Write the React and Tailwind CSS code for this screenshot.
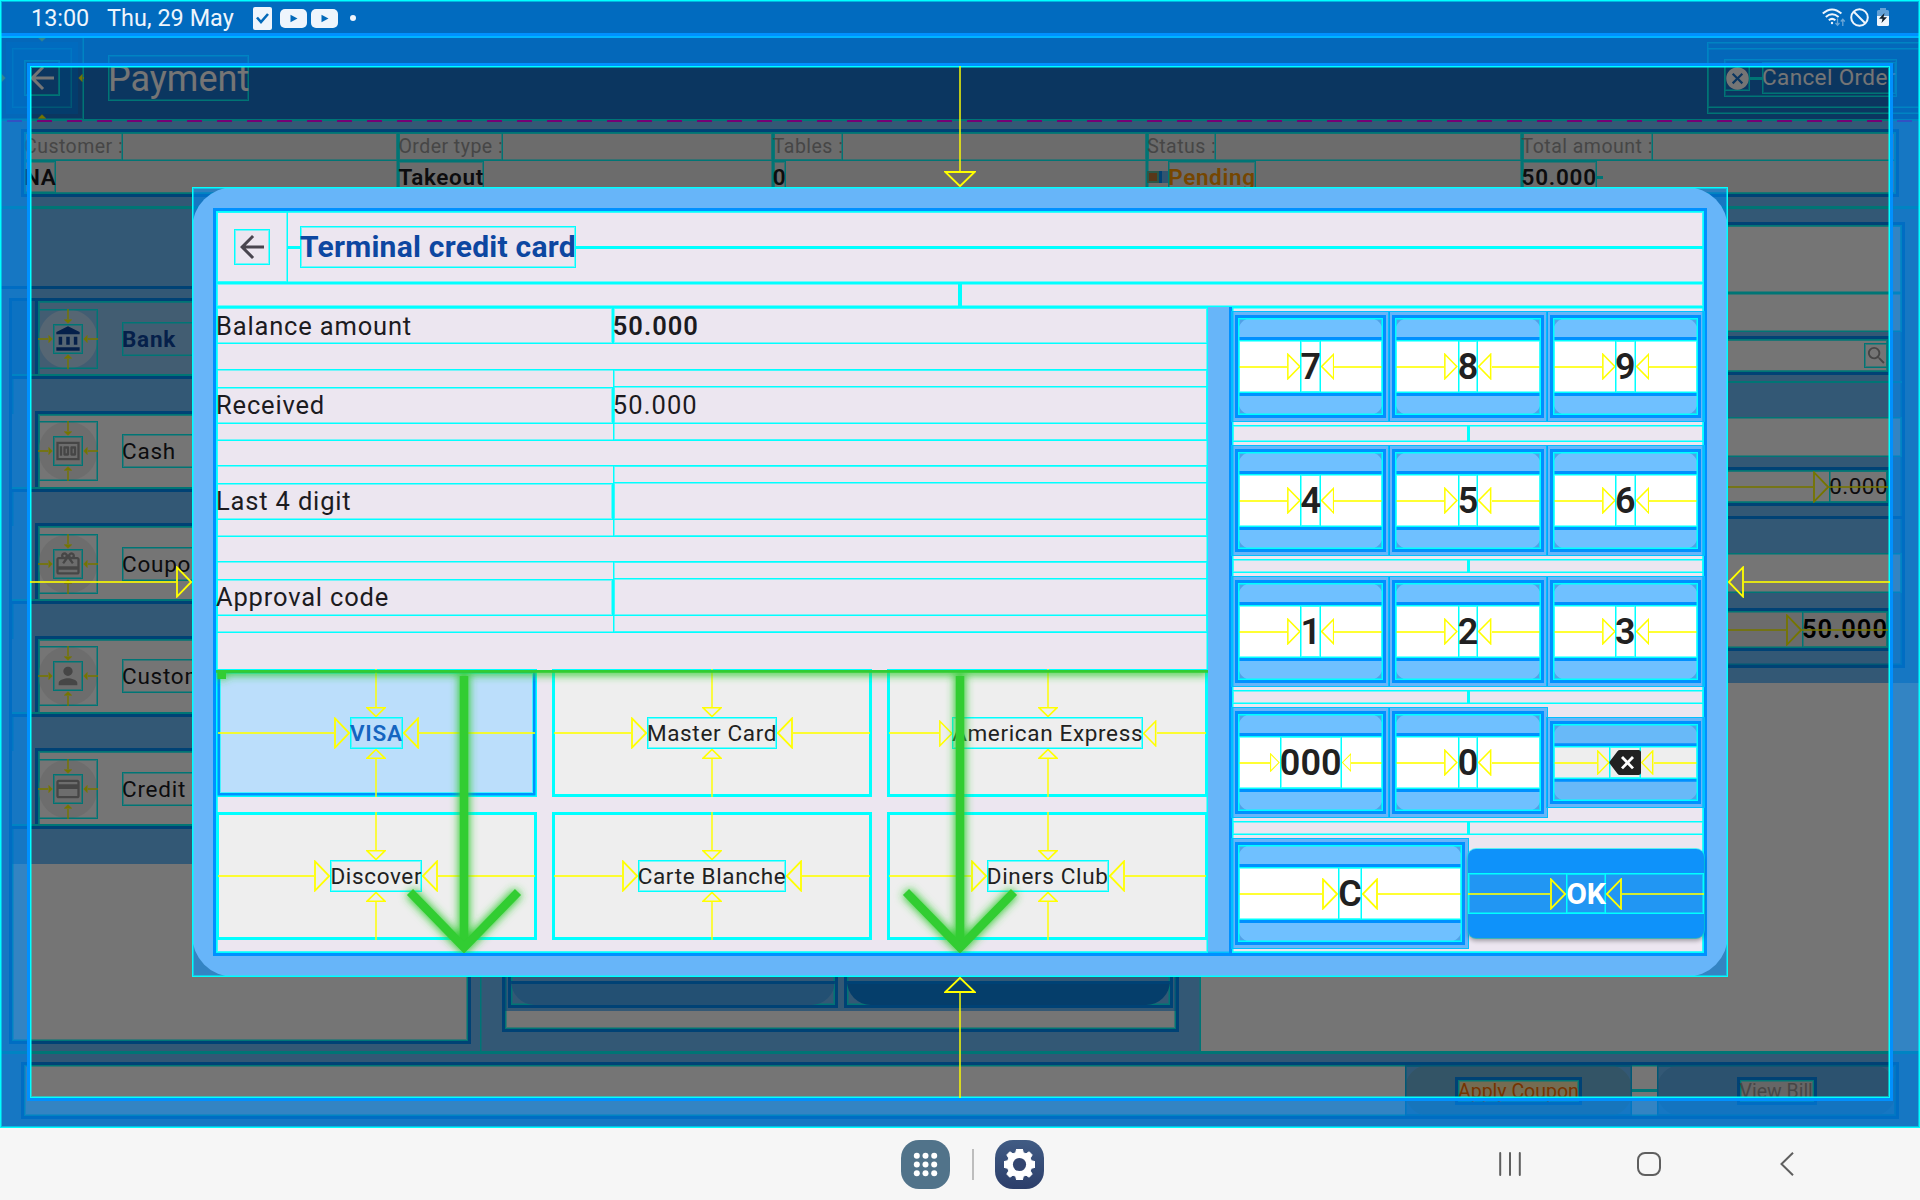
import React from "react";
import { MdArrowBack, MdAccountBalance, MdMoney, MdCardGiftcard, MdPerson, MdCreditCard, MdCancel, MdSearch } from "react-icons/md";

/* Debug-paint primitives: cyan size outline, translucent padding fill, solid padding edge */
const SIZE = "shadow-[inset_0_0_0_1px_#00ffff,inset_0_0_0_2px_#00ffff80]";
const EDGE = "shadow-[0_0_0_3px_#0090ff,inset_0_0_0_1px_#00ffff,inset_0_0_0_2px_#00ffff80]";
const FILL = "border-[#0090ff90]";

function Head({ dir, size, color = "#ffff00", solid }) {
  const d = {
    right: "M1 1.4L15.2 16L1 30.6Z",
    left: "M15 1.4L0.8 16L15 30.6Z",
    down: "M1.4 1L16 15.2L30.6 1Z",
    up: "M1.4 15L16 0.8L30.6 15Z",
  }[dir];
  const horizontal = dir === "right" || dir === "left";
  return (
    <svg className={`shrink-0 ${size}`} viewBox={horizontal ? "0 0 16 32" : "0 0 32 16"}>
      <path d={d} fill={solid ? color : "none"} stroke={color} strokeWidth={horizontal || size.includes("32px") ? 1.8 : 2.6} />
    </svg>
  );
}

function HArrow({ dir, size = "w-[16px] h-[32px]", solid, className = "flex-1" }) {
  const line = <div className="h-[2px] flex-1 bg-[#ffff00cc]" />;
  return (
    <div className={`flex min-w-0 items-center ${className}`}>
      {dir === "right" && line}
      <Head dir={dir} size={size} solid={solid} />
      {dir === "left" && line}
    </div>
  );
}

function VArrow({ dir, size = "w-[32px] h-[16px]", solid, className = "flex-1" }) {
  const line = <div className="w-[2px] flex-1 bg-[#ffff00b8]" />;
  return (
    <div className={`flex min-h-0 flex-col items-center ${className}`}>
      {dir === "down" && line}
      <Head dir={dir} size={size} solid={solid} />
      {dir === "up" && line}
    </div>
  );
}

/* ---------- page behind the dialog ---------- */

function InfoCell({ label, children }) {
  return (
    <div className={`flex flex-col items-start ${SIZE}`}>
      <div className={`h-[29px] w-full ${SIZE}`}>
        <div className={`w-fit whitespace-nowrap pt-[1px] text-[19.5px] leading-[28px] tracking-[0.47px] text-[#9a9a9a] ${SIZE}`}>{label}</div>
      </div>
      <div className="flex h-[32px] items-center text-[22.5px] font-semibold leading-[32px] tracking-[0.65px] text-[#1c1b1f]">{children}</div>
    </div>
  );
}

const methods = [
  { name: "Bank", Icon: MdAccountBalance, active: true },
  { name: "Cash", Icon: MdMoney },
  { name: "Coupon", Icon: MdCardGiftcard },
  { name: "Customer", Icon: MdPerson },
  { name: "Credit", Icon: MdCreditCard },
];

function MethodRow({ name, Icon, active }) {
  return (
    <>
      <div className={`h-[75px] border-l-[26px] ${FILL} ${active ? "bg-[#90caf9]" : "bg-white"} ${SIZE}`}>
        <div className={`flex h-full items-center ${EDGE}`}>
          <div className={`flex size-[60px] flex-col items-center ${SIZE} ${active ? "bg-[radial-gradient(circle,#bbdefb_29px,transparent_30px)]" : "bg-[radial-gradient(circle,#eeeeee_29px,transparent_30px)]"}`}>
            <VArrow dir="down" solid size="w-[8px] h-[5px]" />
            <div className="flex w-full items-center">
              <HArrow dir="right" solid size="w-[5px] h-[8px]" />
              <div className={`flex size-[30px] items-center justify-center ${SIZE}`}>
                <Icon className={`size-[28px] ${active ? "text-[#0d47a1]" : "text-[#9a9a9a]"}`} />
              </div>
              <HArrow dir="left" solid size="w-[5px] h-[8px]" />
            </div>
            <VArrow dir="up" solid size="w-[8px] h-[5px]" />
          </div>
          <div className={`ml-[24px] flex-1 text-[22.5px] leading-[34px] tracking-[0.75px] ${SIZE} ${active ? "font-bold text-[#0d47a1]" : "text-[#1c1b1f]"}`}>{name}</div>
        </div>
      </div>
      <div className="relative h-[37.5px] border-t-[3px] border-[#0090ff] bg-[#0090ff90] bg-clip-padding">
        <div className="absolute inset-x-0 -top-[5px] h-[2px] bg-[#00ffff]" />
      </div>
    </>
  );
}

function Amount({ text, cls, box }) {
  return (
    <div className={`flex ${EDGE} ${box}`}>
      <HArrow dir="right" />
      <div className="relative">
        <div className={`flex h-full items-center ${SIZE} ${cls}`}>{text}</div>
        <div className="absolute inset-x-0 top-1/2 h-[2px] -translate-y-1/2 bg-[#ffff00cc]" />
      </div>
    </div>
  );
}

function FooterButton({ bg, width, text, textWidth, color }) {
  return (
    <div className={`relative ${width}`}>
      <div className={`absolute inset-0 rounded-[24px] ${bg}`} />
      <div className={`relative flex h-full items-center justify-center ${SIZE}`}>
        <div className="absolute inset-0 bg-[#0090ff90]" />
        <div className={`relative h-[22px] whitespace-nowrap text-[19.5px] leading-[23px] ${textWidth} ${bg} ${color} ${EDGE}`}>{text}</div>
      </div>
    </div>
  );
}

function Page() {
  return (
    <div className="absolute inset-x-0 top-0 flex h-[1128px] flex-col bg-white">
      <header className="h-[120px] bg-[#1976d2]">
        <div className="h-[36px] border-b-[3px] border-[#0090ff] bg-[#0090ff90] bg-clip-padding" />
        <div className="flex h-[84px] items-center shadow-[inset_0_1.5px_0_0_#00ffff]">
          <div className={`flex size-[84px] flex-col items-center justify-center ${SIZE}`}>
            <VArrow dir="down" solid size="w-[8px] h-[5px]" />
            <div className="flex w-full items-center">
              <HArrow dir="right" solid size="w-[5px] h-[8px]" />
              <div className={`size-[72px] border-[6px] ${FILL} ${SIZE}`}>
                <div className={`size-[60px] border-[12px] ${FILL} ${SIZE}`}>
                  <div className={`flex size-[36px] items-center justify-center ${SIZE}`}>
                    <MdArrowBack className="size-[36px] text-white" />
                  </div>
                </div>
              </div>
              <HArrow dir="left" solid size="w-[5px] h-[8px]" />
            </div>
            <VArrow dir="up" solid size="w-[8px] h-[5px]" />
          </div>
          <div className={`ml-[24px] h-[46px] text-[36px] leading-[48px] text-white ${SIZE}`}>Payment</div>
          <div className={`ml-auto flex h-[72px] w-[213px] flex-col py-[6px] ${SIZE}`}>
            <div className={`h-[60px] py-[11px] pl-[17px] ${SIZE}`}>
              <div className={`flex h-[38px] w-[173px] items-center ${SIZE}`}>
                <div className={`flex h-[26px] w-[26px] items-center justify-center ${SIZE}`}>
                  <MdCancel className="size-[27px] shrink-0 text-white" />
                </div>
                <div className="h-[3px] w-[12px] shrink-0 bg-[#00ffff]" />
                <div className={`flex h-[32px] items-center whitespace-nowrap text-[22.5px] tracking-[0.375px] text-white ${SIZE}`}>Cancel Order</div>
              </div>
            </div>
          </div>
        </div>
      </header>

      <div className={`relative h-[87px] border-x-[24px] border-b-[13px] border-t-[12px] ${FILL}`}>
        <div className={`grid h-[62px] grid-cols-5 bg-[#ebebeb] ${EDGE}`}>
          <InfoCell label="Customer :"><span className={SIZE}>NA</span></InfoCell>
          <InfoCell label="Order type :"><span className={SIZE}>Takeout</span></InfoCell>
          <InfoCell label="Tables :"><span className={SIZE}>0</span></InfoCell>
          <InfoCell label="Status :">
            <span className="size-[12px] border-2 border-[#00ffff80] bg-[#c07838]" />
            <span className="h-[12px] w-[9px] border-l-[3px] border-[#0090ff] bg-[#0090ff90] bg-clip-padding" />
            <span className={`text-[#ff9800] ${SIZE}`}>Pending</span>
          </InfoCell>
          <InfoCell label="Total amount :">
            <span className={`tracking-[0.75px] ${SIZE}`}>50.000</span>
            <span className="h-[3px] w-[6px] bg-[#00ffff]" />
          </InfoCell>
        </div>
        <div className="absolute -inset-x-[24px] -top-[13px] h-[2px] bg-[#00ffff]" />
        <div className="absolute -left-[17px] -right-[24px] -top-[12px] h-[2px] bg-[repeating-linear-gradient(90deg,#ff00ff_0_15px,transparent_15px_30px)]" />
      </div>

      <div className="relative flex h-[846px]">
        <div className={`flex w-[480px] flex-col ${SIZE}`}>
          <div className="h-[82px] border-b-[3px] border-[#0090ff] bg-[#0090ff90] bg-clip-padding" />
          <div className={`flex-1 border-[12px] bg-white ${FILL}`}>
            <div className={`h-full ${EDGE}`}>
              {methods.map((m) => <MethodRow key={m.name} {...m} />)}
            </div>
          </div>
        </div>

        <div className="relative flex w-[721px] flex-col">
          <div className={`flex flex-1 flex-col border-x-[25px] border-b-[24px] bg-white ${FILL}`}>
            <div className={`flex flex-1 flex-col justify-end pb-[18px] ${EDGE}`}>
              <div className="flex h-[60px]">
                <div className={`flex flex-1 flex-col justify-end border-[6px] ${FILL}`}>
                  <div className={`flex h-[48px] flex-col justify-end bg-[#6fc0ff] ${EDGE}`}>
                    <div className="h-[24px] rounded-b-[34px] border-t-[3px] border-[#0090ff] bg-[#4caefa]" />
                  </div>
                </div>
                <div className={`flex flex-1 flex-col justify-end border-[6px] ${FILL}`}>
                  <div className={`flex h-[48px] flex-col justify-end bg-[#6fc0ff] ${EDGE}`}>
                    <div className="h-[24px] rounded-b-[34px] border-t-[3px] border-[#0090ff] bg-[#0b87e9]" />
                  </div>
                </div>
              </div>
            </div>
          </div>
          <div className={`absolute inset-0 ${SIZE}`} />
        </div>

        <div className="w-[719px]">
          <div className={`border-[18px] bg-white ${FILL}`}>
            <div className={EDGE}>
              <div className={`h-[68px] ${SIZE}`} />
              <div className={`h-[39px] ${SIZE}`} />
              <div className={`h-[49px] border-b-[9px] border-r-[14px] border-t-[7px] ${FILL} ${SIZE}`}>
                <div className={`flex h-[33px] justify-end ${EDGE}`}>
                  <div className={`mt-[4px] flex h-[25px] w-[24px] items-center justify-center ${SIZE}`}>
                    <MdSearch className="size-[23px] text-[#9a9a9a]" />
                  </div>
                </div>
              </div>
              <div className="h-[36px] bg-[#0090ff90] shadow-[inset_0_2px_0_0_#00ffff]" />
              <div className={`h-[40px] ${SIZE}`} />
              <div className={`h-[59px] border-b-[13px] border-r-[14px] border-t-[13px] ${FILL} ${SIZE}`}>
                <Amount text="0.000" box="h-[33px]" cls="text-[22.5px] tracking-[0.45px] text-[#1c1b1f]" />
              </div>
              <div className="h-[37px] border-t-[3px] border-[#0090ff] bg-[#0090ff90] bg-clip-padding" />
              <div className={`h-[40px] ${SIZE}`} />
              <div className={`h-[72px] border-b-[17px] border-r-[14px] border-t-[18px] ${FILL} ${SIZE}`}>
                <Amount text="50.000" box="h-[37px] bg-[#ebebeb]" cls="text-[25.5px] font-semibold tracking-[1px] text-black" />
              </div>
            </div>
          </div>
        </div>
        <div className="absolute inset-x-0 -top-[1px] h-[3px] bg-[#00ffff]" />
        <div className="absolute inset-x-0 -bottom-[1px] h-[3px] bg-[#00ffff]" />
      </div>

      <div className={`h-[75px] border-x-[24px] border-b-[12px] border-t-[12px] bg-white ${FILL}`}>
        <div className={`flex h-full justify-end ${EDGE}`}>
          <FooterButton bg="bg-[#ffecb3]" width="w-[227px]" textWidth="w-[121px]" text="Apply Coupon" color="text-[#ff6f00]" />
          <div className="h-[3px] w-[25px] self-center bg-[#00ffff]" />
          <FooterButton bg="bg-[#dedede]" width="w-[239px]" textWidth="w-[74px]" text="View Bill" color="text-[#9a9a9a]" />
        </div>
      </div>
    </div>
  );
}

/* ---------- dialog ---------- */

function FieldRow({ label, value }) {
  return (
    <div className={`flex h-[72px] shrink-0 items-center ${SIZE}`}>
      <div className={`h-[37px] w-[396.8px] text-[25.5px] leading-[37px] tracking-[0.83px] ${SIZE}`}>{label}</div>
      <div className={`flex h-full flex-1 flex-col justify-center ${SIZE}`}>
        <div className={`h-[38px] text-[25.5px] leading-[38px] tracking-[1.1px] ${SIZE}`}>{value}</div>
      </div>
    </div>
  );
}

function Tile({ text, active, head = "w-[16px] h-[32px]" }) {
  return (
    <div className={`flex h-[128px] flex-col items-center ${active ? "bg-[#bbdefb] font-semibold text-[#1565c0] shadow-[inset_0_0_0_1.5px_#00ffff,inset_0_0_0_4px_#0090ff,inset_0_0_0_5px_#00ffffa0]" : "bg-[#eeeeee] text-[#212121] shadow-[inset_0_0_0_3px_#00ffff]"}`}>
      <VArrow dir="down" size="w-[20px] h-[10px]" />
      <div className="flex w-full items-center px-[2px]">
        <HArrow dir="right" size={head} />
        <div className={`whitespace-nowrap text-[22.5px] leading-[32px] tracking-[0.65px] ${SIZE}`}>{text}</div>
        <HArrow dir="left" size={head} />
      </div>
      <VArrow dir="up" size="w-[20px] h-[10px]" />
    </div>
  );
}

function Key({ children, head = "w-[13.5px] h-[27px]", width = "w-[157.33px]", small }) {
  return (
    <div className={`shrink-0 border-[6px] ${FILL} shadow-[0_0_0_1px_#00bfff] ${width} ${small ? "h-[88.5px]" : "h-[109.5px]"}`}>
      <div className={`relative h-full bg-[#bdb6c4] ${EDGE}`}>
        <div className={`absolute inset-0 rounded-[14px] ${small ? "bg-[#eeeeee]" : "bg-white"}`} />
        <div className={`relative h-full border-y-[22px] ${FILL}`}>
          <div className={`flex h-full items-stretch ${EDGE} ${small ? "bg-[#eeeeee]" : "bg-white"} [clip-path:inset(-3px_0)]`}>
            <HArrow dir="right" size={head} />
            <div className={`flex items-center text-[36px] font-semibold text-[#212121] ${SIZE}`}>{children}</div>
            <HArrow dir="left" size={head} />
          </div>
        </div>
        <div className={`pointer-events-none absolute inset-0 ${SIZE}`} />
      </div>
    </div>
  );
}

function KeyGap({ h }) {
  return (
    <div className={`flex shrink-0 justify-center ${h} ${SIZE}`}>
      <div className="h-full w-[3px] bg-[#00ffff]" />
    </div>
  );
}

function KeyRow({ keys }) {
  return (
    <div className="flex h-[117px] shrink-0 items-center">
      {keys.map((k) => <Key key={k}>{k}</Key>)}
    </div>
  );
}

function Backspace() {
  return (
    <svg className="h-[25px] w-[32px]" viewBox="0 0 32 25">
      <path d="M8.5 1.2Q9.4 0 10.9 0H29.5Q32 0 32 2.5V22.5Q32 25 29.5 25H10.9Q9.4 25 8.5 23.8L.7 13.6Q0 12.5 .7 11.4Z" fill="#212121" />
      <path d="M13 7L24 18.400M24 7L13 18.400" stroke="#fff" strokeWidth="2.8" />
    </svg>
  );
}

function OverflowArrows() {
  const arrow = (cx) => (
    <g key={cx}>
      <path d={`M${cx} 6V278`} />
      <path d={`M${cx - 54} 222L${cx} 277.500L${cx + 54} 222`} />
    </g>
  );
  const shapes = (top) => (
    <>
      <path d="M0 1H992" strokeWidth={top} />
      <path d="M1.500 5H10" strokeWidth="8" />
      {arrow(248)}
      {arrow(744)}
    </>
  );
  return (
    <svg className="absolute inset-x-0 bottom-0 h-[283px] w-[992px]" viewBox="0 0 992 283" fill="none" stroke="#32cd32" strokeWidth="8.5">
      <defs>
        <filter id="glow" x="-5%" y="-5%" width="110%" height="110%"><feGaussianBlur stdDeviation="4" /></filter>
      </defs>
      <g filter="url(#glow)" strokeWidth="11">{shapes(8)}</g>
      {shapes(3.5)}
    </svg>
  );
}

function Dialog() {
  return (
    <div className="relative h-[790px] w-[1536px] shrink-0">
      <div className="absolute inset-0 rounded-[42px] bg-[#ece6f0]" />
      <div className={`relative h-full border-[24px] ${FILL}`}>
        <div className={`flex h-full flex-col bg-[#ece6f0] text-[#1c1b1f] ${EDGE}`}>
          <div className={`flex h-[72px] shrink-0 items-center ${SIZE}`}>
            <div className={`flex size-[72px] items-center justify-center ${SIZE}`}>
              <div className={`flex size-[36px] items-center justify-center ${SIZE}`}>
                <MdArrowBack className="size-[36px] text-[#49454f]" />
              </div>
            </div>
            <div className="h-[3px] w-[12px] bg-[#00ffff]" />
            <div className={`whitespace-nowrap text-[30px] font-bold leading-[42px] tracking-[0.25px] text-[#0d47a1] ${SIZE}`}>Terminal credit card</div>
            <div className="h-[3px] flex-1 bg-[#00ffff]" />
          </div>
          <div className={`flex h-[24px] shrink-0 justify-center ${SIZE}`}>
            <div className="w-[4px] bg-[#00ffff]" />
          </div>
          <div className="flex min-h-0 flex-1">
            <div className={`relative flex w-[992px] flex-col ${SIZE}`}>
              <div className="flex h-[37px] shrink-0 text-[25.5px] leading-[38px]">
                <div className={`w-[396.8px] tracking-[0.83px] ${SIZE}`}>Balance amount</div>
                <div className={`flex-1 font-semibold tracking-[1px] ${SIZE}`}>50.000</div>
              </div>
              <div className="h-[25px] shrink-0" />
              <FieldRow label="Received" value="50.000" />
              <div className="h-[24px] shrink-0" />
              <FieldRow label="Last 4 digit" />
              <div className="h-[24px] shrink-0" />
              <FieldRow label="Approval code" />
              <div className="h-[36px] shrink-0" />
              <div className="grid grid-cols-3 gap-[15px]">
                <Tile text="VISA" active />
                <Tile text="Master Card" />
                <Tile text="American Express" head="w-[13.5px] h-[27px]" />
                <Tile text="Discover" />
                <Tile text="Carte Blanche" />
                <Tile text="Diners Club" />
              </div>
              <OverflowArrows />
            </div>
            <div className={`w-[496px] border-l-[24px] ${FILL}`}>
              <div className="flex h-full flex-col pt-[1px] shadow-[-3px_0_0_0_#0090ff,inset_0_0_0_1.5px_#00ffff]">
                <KeyRow keys={["7", "8", "9"]} />
                <KeyGap h="h-[17px]" />
                <KeyRow keys={["4", "5", "6"]} />
                <KeyGap h="h-[14px]" />
                <KeyRow keys={["1", "2", "3"]} />
                <KeyGap h="h-[14px]" />
                <div className="flex h-[117px] shrink-0 items-center">
                  <Key head="w-[9.5px] h-[19px]">000</Key>
                  <Key>0</Key>
                  <Key small head="w-[12.5px] h-[25px]"><Backspace /></Key>
                </div>
                <KeyGap h="h-[14px]" />
                <div className="flex h-[117px] shrink-0 items-center">
                  <Key width="w-[236px]" head="w-[16px] h-[32px]">C</Key>
                  <div className="h-[89px] flex-1 rounded-[8px] border-y-[24px] border-[#0090ff90] bg-[#2196f3] shadow-[0_3px_4px_0_#00000050,0_0_0_1px_#00ffffa0]">
                    <div className={`flex h-full items-stretch ${SIZE}`}>
                      <HArrow dir="right" />
                      <div className={`flex items-center text-[30px] font-bold text-white ${SIZE}`}>OK</div>
                      <HArrow dir="left" />
                    </div>
                  </div>
                </div>
              </div>
            </div>
          </div>
        </div>
      </div>
      <div className={`pointer-events-none absolute inset-0 ${SIZE}`} />
    </div>
  );
}

function Barrier() {
  return (
    <div className="absolute inset-x-0 top-0 h-[1128px] bg-[#0000008a]">
      <div className={`h-full border-x-[30px] border-b-[30px] border-t-[66px] ${FILL}`}>
        <div className={`flex h-full flex-col items-center ${EDGE}`}>
          <VArrow dir="down" />
          <div className="flex w-full items-center">
            <HArrow dir="right" />
            <Dialog />
            <HArrow dir="left" />
          </div>
          <VArrow dir="up" />
        </div>
      </div>
      <div className="absolute inset-x-0 top-[33px] h-[5px] border-b-2 border-[#00b4ff] bg-[#0090ff]" />
      <div className={`absolute inset-0 ${SIZE}`} />
    </div>
  );
}

/* ---------- system bars ---------- */

function YouTube() {
  return (
    <svg className="h-[19px] w-[27px]" viewBox="0 0 27 19">
      <rect width="27" height="19" rx="5" fill="#eef5fc" />
      <path d="M10.5 5.7L17.5 9.5L10.5 13.3Z" fill="#0269b9" />
    </svg>
  );
}

function StatusBar() {
  return (
    <div className="absolute inset-x-0 top-0 flex h-[36px] items-center pl-[31px] pr-[31px] text-[23.4px] text-[#eef5fc]">
      <span className="w-[76px] pt-[1px]">13:00</span>
      <span className="w-[146px] whitespace-nowrap pt-[1px] tracking-[0.05px]">Thu, 29 May</span>
      <svg className="h-[23px] w-[19px]" viewBox="0 0 19 23">
        <rect width="19" height="23" rx="2" fill="#eef5fc" />
        <path d="M4 10.5L8 15L15 7" fill="none" stroke="#0269b9" strokeWidth="2.6" />
      </svg>
      <div className="ml-[8px] flex gap-[4px]"><YouTube /><YouTube /></div>
      <div className="ml-[12px] size-[6px] rounded-full bg-[#eef5fc]" />
      <div className="ml-auto flex items-center gap-[4px] pb-[2px]">
        <svg className="h-[19px] w-[24px]" viewBox="0 0 24 19" fill="none" stroke="#eef5fc" strokeWidth="2">
          <path d="M.8 5.6Q10 -2.6 19.4 5.6M3.8 9Q10 3.6 16.6 9M6.8 12.2Q10 9.6 13.4 12.2" />
          <circle cx="10" cy="15" r="1.2" fill="#eef5fc" strokeWidth="0" />
          <path d="M15.5 10.500V17M13.500 15L15.500 17.200L17.500 15M20.800 18V11.500M18.800 13.500L20.800 11.300L22.800 13.500" stroke="#6ba6d6" strokeWidth="1.300" />
        </svg>
        <svg className="size-[19px]" viewBox="0 0 19 19" fill="none" stroke="#eef5fc" strokeWidth="2">
          <circle cx="9.500" cy="9.500" r="8.300" />
          <path d="M3.800 3.800L15.200 15.200" />
        </svg>
        <svg className="ml-[4px] h-[18px] w-[12px]" viewBox="0 0 12 18">
          <path d="M3 0H9V2H10.500Q12 2 12 3.500V8H0V3.500Q0 2 1.500 2H3Z" fill="#63a1d6" />
          <path d="M0 8H12V16.500Q12 18 10.500 18H1.500Q0 18 0 16.500Z" fill="#eef5fc" />
          <path d="M7.500 5L2 10.800H5.500L4.500 15L10 9.200H6.500Z" fill="#10202c" />
        </svg>
      </div>
    </div>
  );
}

function NavBar() {
  const dots = [-8.7, 0, 8.7];
  return (
    <div className="absolute inset-x-0 bottom-0 flex h-[72px] items-center bg-[#f6f6f6] pl-[901px] pr-[126px]">
      <svg className="size-[49px]" viewBox="0 0 49 49">
        <rect width="49" height="49" rx="18" fill="#51738a" />
        {dots.map((y) => dots.map((x) => <circle key={`${x},${y}`} cx={24.5 + x} cy={24.5 + y} r="3" fill="#fff" />))}
      </svg>
      <div className="ml-[22px] h-[31px] w-[2px] bg-[#bdbdbd]" />
      <div className="ml-[21px] flex size-[49px] items-center justify-center rounded-[18px] bg-gradient-to-b from-[#415c84] to-[#2c3e6a]">
        <svg className="size-[31px]" viewBox="0 0 31 31">
          <path d="M12.600 0H18.400L19.300 3.700L22 4.800L25.200 2.800L28.200 5.900L26.300 9.100L27.300 11.700L31 12.600V18.400L27.300 19.300L26.300 21.900L28.200 25.100L25.200 28.200L22 26.200L19.300 27.300L18.400 31H12.600L11.700 27.300L9 26.200L5.800 28.200L2.800 25.100L4.700 21.900L3.700 19.300L0 18.400V12.600L3.700 11.700L4.700 9.100L2.800 5.900L5.800 2.800L9 4.800L11.700 3.700Z" fill="#fff" stroke="#fff" strokeLinejoin="round" />
          <circle cx="15.500" cy="15.500" r="6.600" fill="#33456f" />
        </svg>
      </div>
      <div className="ml-auto flex items-center">
        <svg className="h-[24px] w-[22px]" viewBox="0 0 22 24" stroke="#5f5f5f" strokeWidth="2" strokeLinecap="round">
          <path d="M1.200 1V23M11 1V23M20.800 1V23" />
        </svg>
        <svg className="ml-[116px] size-[24px]" viewBox="0 0 24 24" fill="none" stroke="#5f5f5f" strokeWidth="2">
          <rect x="1" y="1" width="22" height="22" rx="7" />
        </svg>
        <svg className="ml-[119px] h-[24px] w-[14px]" viewBox="0 0 14 24" fill="none" stroke="#5f5f5f" strokeWidth="2">
          <path d="M13 .8L1.500 12L13 23.200" />
        </svg>
      </div>
    </div>
  );
}

export default function App() {
  return (
    <div className="relative h-[1200px] w-[1920px] overflow-hidden bg-[#f6f6f6] font-[Roboto,sans-serif]">
      <Page />
      <Barrier />
      <StatusBar />
      <NavBar />
    </div>
  );
}
